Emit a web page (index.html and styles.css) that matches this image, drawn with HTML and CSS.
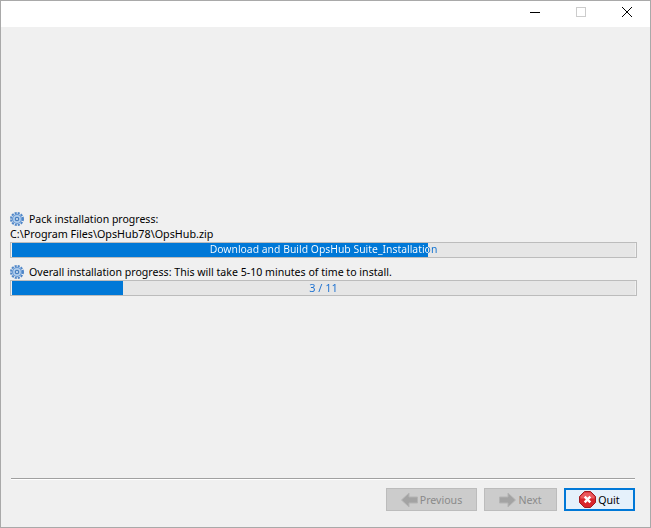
FILE: index.html
```html
<!DOCTYPE html>
<html lang="en">
<head>
<meta charset="utf-8">
<title>Installer</title>
<link rel="stylesheet" href="styles.css">
</head>
<body>
<div class="window">
  <header class="titlebar">
    <svg class="win-btn" width="46" height="26" viewBox="0 0 46 26"><path d="M18 11.500h10" stroke="#000" fill="none"/></svg>
    <svg class="win-btn" width="46" height="26" viewBox="0 0 46 26"><rect x="18.500" y="6.500" width="9" height="9" fill="none" stroke="#ccc"/></svg>
    <svg class="win-btn close" width="46" height="26" viewBox="0 0 46 26"><path d="M18 6l10 10M28 6L18 16" stroke="#000" fill="none"/></svg>
  </header>
  <main class="content">
    <div class="label">
      <svg class="gear" viewBox="0 0 14 14"><use href="#gear"/></svg>
      <span class="pack-title">Pack installation progress:</span>
    </div>
    <div class="path">C:\Program Files\OpsHub78\OpsHub.zip</div>
    <div class="bar fill-pack">
      <span class="bar-text text-pack">Download and Build OpsHub Suite_Installation</span>
    </div>
    <div class="label overall">
      <svg class="gear" viewBox="0 0 14 14"><use href="#gear"/></svg>
      <span>Overall installation progress: This will take 5-10 minutes of time to install.</span>
    </div>
    <div class="bar fill-overall">
      <span class="bar-text text-overall">3 / 11</span>
    </div>
  </main>
  <footer class="footer">
    <hr class="rule">
    <div class="buttons">
      <button class="btn prev" disabled>
        <svg width="17" height="16" viewBox="0 0 17 16"><path d="M0.500 8L8 1v4h8.500v6H8v4z" fill="#a3a3a3" stroke="#b4b4b4"/></svg>
        Previous
      </button>
      <button class="btn next" disabled>
        <svg width="17" height="16" viewBox="0 0 17 16"><path d="M16.500 8L9 1v4H0.500v6H9v4z" fill="#a3a3a3" stroke="#b4b4b4"/></svg>
        Next
      </button>
      <button class="btn quit">
        <svg width="17" height="17" viewBox="0 0 17 17"><path d="M5.500.5h6l5 5v6l-5 5h-6l-5-5v-6z" fill="#d9262c" stroke="#a01c20"/><path d="M5.500 1.500h6l4 4v2H1.500v-2z" fill="#ea5a5e"/><path d="M5.700 5.700l5.600 5.600M11.300 5.700l-5.600 5.600" stroke="#fff" stroke-width="2.400" fill="none"/></svg>
        Quit
      </button>
    </div>
  </footer>
</div>
<svg class="defs" width="0" height="0">
  <defs>
    <g id="gear">
      <circle cx="7" cy="7" r="6" fill="none" stroke="#4f86c8" stroke-width="2" stroke-dasharray="2.100 1.040"/>
      <circle cx="7" cy="7" r="5" fill="#5f94d2"/>
      <circle cx="7" cy="7" r="3.900" fill="#b0cdec"/>
      <circle cx="7" cy="7" r="2.300" fill="#4a80c0"/>
      <circle cx="7" cy="7" r="1" fill="#dce9f6"/>
    </g>
  </defs>
</svg>
</body>
</html>
```
FILE: styles.css
```css
* { box-sizing: border-box; }
html, body { margin: 0; height: 100%; }
body { font-family: "Noto Sans", "Liberation Sans", sans-serif; font-size: 10.6px; color: #000; }
.window {
  width: 651px; height: 528px;
  display: flex; flex-direction: column;
  background: #f0f0f0;
  border: 1px solid #a9a9a9;
}
.titlebar {
  height: 26px; flex: none;
  background: #fff;
  display: flex; justify-content: flex-end;
}
.win-btn { display: block; }
.content {
  height: 451px; flex: none;
  padding: 184px 13px 0 9px;
}
.label { display: flex; align-items: center; gap: 5px; height: 16px; }
.gear { width: 14px; height: 14px; flex: none; }
.pack-title { font-size: 10.5px; }
.path { height: 15px; line-height: 15px; font-size: 10.75px; }
.overall { margin-top: 5px; height: 17px; }
.bar {
  width: 627px; height: 16px;
  border: 1px solid #bcbcbc;
  padding: 0 1px;
  background-origin: content-box;
  background-clip: content-box;
  background-repeat: no-repeat;
  background-color: #e6e6e6;
}
.fill-pack { background-image: linear-gradient(#0078d7, #0078d7); background-size: 416px 100%; }
.fill-overall { background-image: linear-gradient(#0078d7, #0078d7); background-size: 111px 100%; }
.bar-text {
  display: block; width: 100%;
  line-height: 13px; text-align: center; white-space: nowrap;
  color: transparent;
  -webkit-background-clip: text;
  background-clip: text;
}
.text-pack { font-size: 10.4px; background-image: linear-gradient(to right, #fff 416px, #0a6fd0 416px); }
.text-overall { font-size: 11px; background-image: linear-gradient(to right, #fff 111px, #1a6fd0 111px); }
.footer { flex: 1; padding: 0 15px 0 10px; }
.rule { margin: 0; border: 0; border-top: 1px solid #a0a0a0; border-bottom: 1px solid #fff; height: 2px; }
.buttons { display: flex; justify-content: flex-end; gap: 7px; margin-top: 8px; }
.btn {
  height: 23px; padding: 0;
  display: flex; align-items: center; justify-content: center; gap: 2px;
  font: inherit;
  background: #cccccc; color: #8a8a8a;
  border: 1px solid #bcbcbc;
}
.prev { width: 91px; }
.next { width: 73px; }
.quit { width: 71px; background: #e5f1fb; color: #000; border: 2px solid #0078d7; }
.defs { position: absolute; }
```
